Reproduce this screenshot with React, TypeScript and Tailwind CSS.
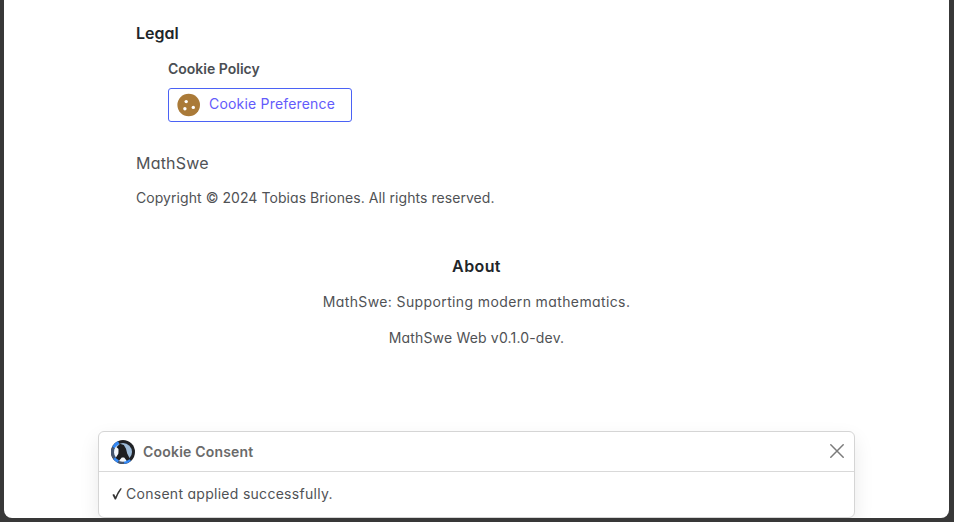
import type { ReactNode } from 'react';

function Line({ className, children }: { className: string; children: ReactNode }) {
  return <p className={`whitespace-nowrap ${className}`}>{children}</p>;
}

function CookieIcon() {
  return (
    <svg width="24" height="24" viewBox="0 0 24 24" className="shrink-0">
      <circle cx="11.7" cy="12" r="11.3" fill="#aa7a38" />
      <circle cx="9.2" cy="8.6" r="1.7" fill="#fff" />
      <circle cx="7.9" cy="15.7" r="1.7" fill="#fff" />
      <circle cx="16.3" cy="14.4" r="1.7" fill="#fff" />
    </svg>
  );
}

function Logo() {
  return (
    <svg width="24" height="24" viewBox="0 0 24 24" className="shrink-0">
      <circle cx="12" cy="12" r="12" fill="#202226" />
      <path d="M12 12 1 7A12 12 0 0 1 7 1.1Z" fill="#3388f5" />
      <path d="M12 12 1 7A12 12 0 0 0 3 20Z" fill="#46566f" />
      <path d="M12 12 2.2 19A12 12 0 0 0 7 22.9Z" fill="#3388f5" />
      <path d="M12 12 6.8 22.8A12 12 0 0 0 14 23.8Z" fill="#46566f" />
      <path d="M12 12 13.3 23.9A12 12 0 0 0 20 21Z" fill="#3388f5" />
      <circle cx="12" cy="12" r="9" fill="#9dbbd8" />
      <path d="M5 6.5A9 9 0 0 0 5.4 18L8 12 7 7.5Z" fill="#f4f7fa" />
      <path d="M8 21 10.6 16.8H13L15.5 21Q12 22.6 8 21Z" fill="#f4f7fa" />
      <path d="M5.5 7.2 9 3.8 12.8 5 15 8.8 16.2 13.5 19 19 15.8 20.8 13.2 17.5H10.8L8.2 20.4 4.6 18 7.4 13.8 7.6 9Z" fill="#1d1e20" />
    </svg>
  );
}

function CloseIcon() {
  return (
    <svg width="14" height="14" viewBox="0 0 14 14" fill="none" stroke="#7b7b7b" strokeWidth="1.5" strokeLinecap="round">
      <path d="m.8.8 12.4 12.4M13.2.8.8 13.2" />
    </svg>
  );
}

export default function App() {
  return (
    <div className="h-[522px] w-[954px] overflow-hidden bg-[#383838] pl-1 font-['Inter','Noto_Sans',sans-serif] text-sm leading-5 text-[#505255] [font-feature-settings:'cv11']">
      <div className="flex h-[518px] w-[945px] flex-col overflow-hidden rounded-b-lg bg-white">
        <section className="flex h-[208px] flex-col items-start pl-[132px] pt-[21px]">
          <Line className="text-base leading-6 font-semibold text-[#212529]">Legal</Line>
          <div className="flex flex-col items-start pl-8 pt-[14px]">
            <Line className="font-semibold text-[#4a4e53]">Cookie Policy</Line>
            <button className="mt-[9px] flex h-[34px] w-[184px] items-center rounded-[3px] border border-[#4b62f5] pl-2 text-[#635bfb]">
              <CookieIcon />
              <span className="mb-0.5 ml-2 whitespace-nowrap tracking-[0.19px]">Cookie Preference</span>
            </button>
          </div>
          <Line className="mt-[29px] text-base leading-6 tracking-[0.2px]">MathSwe</Line>
          <Line className="mt-[13px] tracking-[0.06px]">Copyright © 2024 Tobias Briones. All rights reserved.</Line>
        </section>
        <section className="flex h-[223px] flex-col items-center pt-[46px]">
          <Line className="text-base leading-6 font-semibold tracking-[0.4px] text-[#212529]">About</Line>
          <Line className="mt-[14px] tracking-[0.385px]">MathSwe: Supporting modern mathematics.</Line>
          <Line className="mt-4 tracking-[0.17px]">MathSwe Web v0.1.0-dev.</Line>
        </section>
        <aside className="ml-[94px] flex h-[87px] w-[757px] shrink-0 flex-col rounded-md border border-[#d5d5d5] bg-white shadow-[0_8px_20px_rgba(0,0,0,0.09)]">
          <header className="flex h-10 items-center border-b border-[#d9d9d9] pl-3 pr-[10px]">
            <Logo />
            <span className="ml-2 whitespace-nowrap font-semibold tracking-[0.2px] text-[#6a6a6a]">Cookie Consent</span>
            <button aria-label="Close" className="mb-px ml-auto"><CloseIcon /></button>
          </header>
          <div className="flex flex-1 items-center pb-px pl-[13px]">
            <svg width="10" height="12" viewBox="0 0 10 12" className="mr-1">
              <path d="M.4 6.8 2.1 6l1.4 2.8Q5.8 3.4 8.4.3l1.5.1Q6.3 5.2 4 11.5H2.8Z" fill="#343434" />
            </svg>
            <Line className="tracking-[0.28px]">Consent applied successfully.</Line>
          </div>
        </aside>
      </div>
    </div>
  );
}
